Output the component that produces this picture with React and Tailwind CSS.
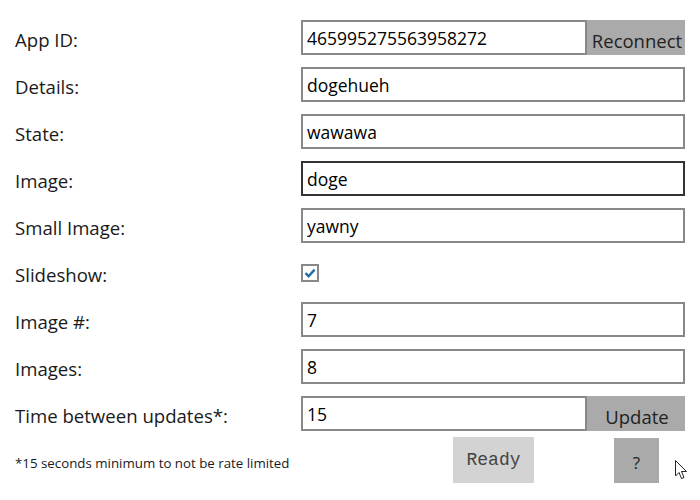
const rows = [
  { label: "App ID:", value: "465995275563958272", button: "Reconnect" },
  { label: "Details:", value: "dogehueh" },
  { label: "State:", value: "wawawa" },
  { label: "Image:", value: "doge", focused: true },
  { label: "Small Image:", value: "yawny" },
  { label: "Slideshow:", check: true },
  { label: "Image #:", value: "7" },
  { label: "Images:", value: "8" },
  { label: "Time between updates*:", value: "15", button: "Update" },
];

function Field({ row }) {
  if (row.check) {
    return (
      <div className="flex items-center h-full">
        <div className="w-[18px] h-[18px] border-2 border-[#888] bg-white flex items-center justify-center">
          <svg width="12" height="12" viewBox="0 0 12 12">
            <path d="M1.5 6.2 L4.6 9.2 L10.6 2.6" fill="none" stroke="#1f6fa6" strokeWidth="2.4" />
          </svg>
        </div>
      </div>
    );
  }
  return (
    <div className="flex h-full">
      <input
        readOnly
        value={row.value}
        className={
          "h-full flex-1 min-w-0 border-2 bg-white pl-[4px] text-[17.5px] text-black outline-none " +
          (row.focused ? "border-[#333]" : "border-[#888]")
        }
      />
      {row.button && (
        <button className="h-full w-[98px] bg-[#aaa] flex items-center justify-center">
          <span className="text-[18.5px] text-[#222] pt-[6px] pl-[2px]">{row.button}</span>
        </button>
      )}
    </div>
  );
}

export default function App() {
  return (
    <div className="relative w-[700px] h-[500px] bg-white pt-[20px] font-['Open_Sans',sans-serif] text-[#1a1a1a]">
      {rows.map((row) => (
        <div key={row.label} className="flex h-[35px] mb-[12px]">
          <div className="w-[301px] pl-[15px] flex items-center text-[18.6px] pt-[4px]">{row.label}</div>
          <div className="w-[384px]">
            <Field row={row} />
          </div>
        </div>
      ))}
      <div className="flex items-start -mt-[6px]">
        <div className="w-[453px] pl-[15px] pt-[17px] text-[13.3px]">*15 seconds minimum to not be rate limited</div>
        <button className="w-[81px] h-[46px] bg-[#d3d3d3] flex items-center justify-center">
          <span className="font-mono text-[18px] text-[#444]">Ready</span>
        </button>
        <button className="ml-[80px] mt-[1px] w-[45px] h-[45px] bg-[#aaa] flex items-center justify-center">
          <span className="text-[17px] text-[#222] pt-[4px]">?</span>
        </button>
        <svg className="ml-[16px] mt-[23px]" width="13" height="20" viewBox="0 0 13 20">
          <path d="M0.5 0.5 L0.5 16 L4 12.5 L6.5 18.5 L9 17.5 L6.5 11.5 L11.5 11.5 Z" fill="white" stroke="#222" strokeWidth="1" />
        </svg>
      </div>
    </div>
  );
}
